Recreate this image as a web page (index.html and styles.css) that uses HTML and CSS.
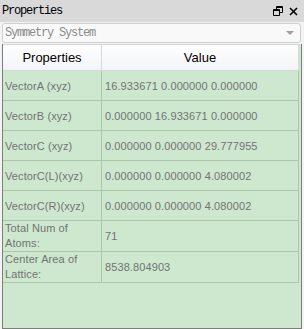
FILE: index.html
```html
<!DOCTYPE html>
<html lang="en">
<head>
  <meta charset="UTF-8">
  <title>Properties</title>
  <link rel="stylesheet" href="styles.css">
</head>
<body>

  <!-- Dock title -->
  <div class="titlebar">
    <span class="title">Properties</span>
    <span class="title-icons">
      <svg width="10" height="10" viewBox="0 0 10 10">
        <path d="M3.5 0.5h6v6h-6z M3.5 1.5h6" fill="none" stroke="#000" stroke-width="1"/>
        <path d="M0.5 3.5h6v6h-6z M0.5 4.5h6" fill="#d9d9d9" stroke="#000" stroke-width="1"/>
      </svg>
      <svg width="9" height="9" viewBox="0 0 9 9">
        <path d="M1 1L8 8M8 1L1 8" stroke="#000" stroke-width="1.6"/>
      </svg>
    </span>
  </div>

  <!-- System combo -->
  <div class="combo">
    <span>Symmetry System</span>
    <span class="combo-arrow"></span>
  </div>

  <!-- Properties table -->
  <div class="panel">
    <table class="props">
      <thead>
        <tr><th class="col-name">Properties</th><th>Value</th></tr>
      </thead>
      <tbody>
        <tr><td>VectorA (xyz)</td><td>16.933671 0.000000 0.000000</td></tr>
        <tr><td>VectorB (xyz)</td><td>0.000000 16.933671 0.000000</td></tr>
        <tr><td>VectorC (xyz)</td><td>0.000000 0.000000 29.777955</td></tr>
        <tr><td>VectorC(L)(xyz)</td><td>0.000000 0.000000 4.080002</td></tr>
        <tr><td>VectorC(R)(xyz)</td><td>0.000000 0.000000 4.080002</td></tr>
        <tr><td class="two-line">Total Num of<br>Atoms:</td><td>71</td></tr>
        <tr><td class="two-line">Center Area of<br>Lattice:</td><td>8538.804903</td></tr>
      </tbody>
    </table>
  </div>

</body>
</html>
```

FILE: styles.css
```css
body {
  margin: 0;
  background-color: #f3f3f3;
  font-family: "Liberation Sans", Arial, sans-serif;
  overflow: hidden;
}

.titlebar {
  height: 22px;
  background-color: #d9d9d9;
  display: flex;
  align-items: center;
  justify-content: space-between;
  padding: 0 6px 0 2px;
}

.title {
  font-family: "Liberation Mono", monospace;
  font-size: 12px;
  letter-spacing: -1.2px;
  color: #000;
}

.title-icons {
  display: flex;
  align-items: center;
  gap: 6px;
}

.combo {
  height: 18px;
  margin: 1px 3px 1px 2px;
  border: 1px solid #cfcfcf;
  border-radius: 3px;
  background-color: #f9f9f9;
  display: flex;
  align-items: center;
  justify-content: space-between;
  padding: 0 6px 0 2px;
  font-family: "Liberation Mono", monospace;
  font-size: 12px;
  letter-spacing: -1.2px;
  color: #8c8c8c;
}

.combo-arrow {
  width: 0;
  height: 0;
  border-left: 4px solid transparent;
  border-right: 4px solid transparent;
  border-top: 4px solid #a0a0a0;
}

.panel {
  margin-left: 2px;
  width: 298px;
  height: 284px;
  border: 1px solid #7d7d7d;
  border-top: none;
  background-color: #cde8cf;
}

.props {
  width: 296px;
  border-collapse: collapse;
  table-layout: fixed;
}

.props th {
  height: 25px;
  padding: 0;
  font-weight: normal;
  font-size: 13px;
  color: #000;
  background: linear-gradient(#ffffff, #f2f3f7);
  border-top: 1px solid #d8d8d8;
  border-right: 1px solid #d8d8d8;
  border-bottom: 1px solid #d8d8d8;
}

.props .col-name {
  width: 98px;
}

.props td {
  height: 29px;
  padding: 0 0 0 3px;
  font-size: 11px;
  letter-spacing: 0.1px;
  color: #737373;
  border-right: 1px solid #aac6ab;
  border-bottom: 1px solid #aac6ab;
  white-space: nowrap;
}

.props td:first-child {
  padding-left: 2px;
}

.props td.two-line {
  line-height: 15px;
  white-space: normal;
}
```
